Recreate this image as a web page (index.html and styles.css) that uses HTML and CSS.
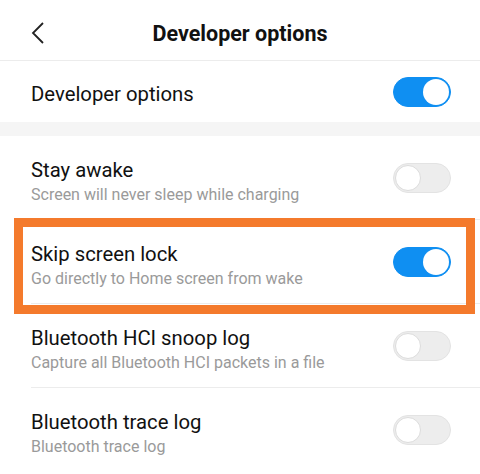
FILE: index.html
```html
<!DOCTYPE html>
<html lang="en">
<head>
  <meta charset="UTF-8" />
  <meta name="viewport" content="width=device-width, initial-scale=1.0" />
  <title>Developer options</title>
  <link rel="stylesheet" href="styles.css">
</head>
<body>
  <div class="screen">
    <header class="topbar">
      <svg class="back" width="14" height="22" viewBox="0 0 14 22" aria-hidden="true">
        <polyline points="12,1 2,11 12,21" fill="none" stroke="#222" stroke-width="1.8" />
      </svg>
      <h1>Developer options</h1>
    </header>

    <div class="master">
      <span class="title">Developer options</span>
      <span class="switch on"></span>
    </div>

    <div class="band"></div>

    <div class="list">
      <div class="row">
        <div class="text">
          <div class="title">Stay awake</div>
          <div class="sub">Screen will never sleep while charging</div>
        </div>
        <span class="switch"></span>
      </div>

      <div class="row marked">
        <div class="text">
          <div class="title">Skip screen lock</div>
          <div class="sub">Go directly to Home screen from wake</div>
        </div>
        <span class="switch on"></span>
      </div>

      <div class="row">
        <div class="text">
          <div class="title">Bluetooth HCI snoop log</div>
          <div class="sub">Capture all Bluetooth HCI packets in a file</div>
        </div>
        <span class="switch"></span>
      </div>

      <div class="row last">
        <div class="text">
          <div class="title">Bluetooth trace log</div>
          <div class="sub">Bluetooth trace log</div>
        </div>
        <span class="switch"></span>
      </div>
    </div>
  </div>
</body>
</html>
```

FILE: styles.css
```css
:root {
  --text: #111;
  --subtle: #9a9a9a;
  --line: #ececec;
  --blue: #0f8ff2;
  --orange: #f47a2c;
}

body {
  margin: 0;
  font-family: Roboto, "Noto Sans", sans-serif;
  background: #fff;
  color: var(--text);
}

.screen {
  width: 480px;
  height: 474px;
  overflow: hidden;
}

.topbar {
  height: 61px;
  border-bottom: 1px solid var(--line);
  display: flex;
  align-items: center;
  justify-content: center;
  position: relative;
  padding-top: 7px;
  box-sizing: border-box;
}

.topbar .back {
  position: absolute;
  left: 31px;
  top: 22px;
}

h1 {
  margin: 0;
  font-size: 21.5px;
  font-weight: 700;
  line-height: 24px;
}

.title {
  font-size: 20.3px;
  line-height: 24px;
}

.sub {
  font-size: 16px;
  line-height: 20px;
  margin-top: 3px;
  color: var(--subtle);
}

.master {
  height: 61px;
  display: flex;
  align-items: center;
  justify-content: space-between;
  padding: 0 29px 0 31px;
}

.master .title {
  margin-top: 4px;
}

.band {
  height: 14px;
  background: #f5f5f5;
}

.row {
  height: 84px;
  margin-left: 31px;
  padding-right: 29px;
  border-bottom: 1px solid var(--line);
  display: flex;
  align-items: center;
  justify-content: space-between;
  position: relative;
  box-sizing: border-box;
}

.row.last {
  border-bottom: none;
}

.row .text {
  margin-top: 7px;
}

/* annotation box drawn over the row */
.row.marked::after {
  content: "";
  position: absolute;
  top: -2px;
  left: -17px;
  right: 5px;
  bottom: -11px;
  border: 9px solid var(--orange);
}

.switch {
  width: 58px;
  height: 30px;
  border-radius: 15px;
  background: #ededed;
  border: 1px solid #e3e3e3;
  box-sizing: border-box;
  position: relative;
  flex: none;
}

.switch::before {
  content: "";
  position: absolute;
  top: 1px;
  left: 1px;
  width: 26px;
  height: 26px;
  border-radius: 50%;
  background: #fff;
  border: 1px solid #dcdcdc;
  box-sizing: border-box;
}

.switch.on {
  background: var(--blue);
  border-color: var(--blue);
}

.switch.on::before {
  left: auto;
  right: 1px;
  border: none;
}
```
